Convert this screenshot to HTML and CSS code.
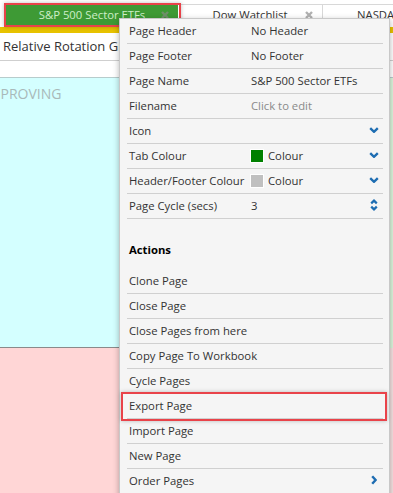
FILE: index.html
```html
<!DOCTYPE html>
<html lang="en">
<head>
    <meta charset="UTF-8">
    <meta name="viewport" content="width=device-width, initial-scale=1.0">
    <title>Page Settings</title>
    <link rel="stylesheet" href="styles.css">
</head>
<body>
    <div class="app">
        <div class="tabbar">
            <div class="tab active">
                <span class="tab-label">S&amp;P 500 Sector ETFs</span>
                <svg class="tab-close" viewBox="0 0 10 10"><path d="M2 2l6 6M8 2l-6 6"/></svg>
            </div>
            <div class="tab">
                <span class="tab-label">Dow Watchlist</span>
                <svg class="tab-close" viewBox="0 0 10 10"><path d="M2 2l6 6M8 2l-6 6"/></svg>
            </div>
            <div class="tab last">
                <span class="tab-label">NASDAQ 100</span>
            </div>
        </div>
        <div class="accent"></div>
        <div class="page-title">Relative Rotation Graph</div>
        <div class="spacer"></div>
        <div class="quadrants">
            <div class="quad improving">IMPROVING</div>
            <div class="quad leading"></div>
            <div class="quad lagging"></div>
            <div class="quad weakening"></div>
        </div>
    </div>

    <!-- highlight around the active tab -->
    <div class="mark mark-tab"></div>

    <div class="menu">
        <div class="menu-row">
            <span>Page Header</span><span>No Header</span><span></span>
        </div>
        <div class="menu-row">
            <span>Page Footer</span><span>No Footer</span><span></span>
        </div>
        <div class="menu-row">
            <span>Page Name</span><span>S&amp;P 500 Sector ETFs</span><span></span>
        </div>
        <div class="menu-row">
            <span>Filename</span><span class="muted">Click to edit</span><span></span>
        </div>
        <div class="menu-row">
            <span>Icon</span><span></span>
            <svg class="chev" viewBox="0 0 10 6"><path d="M1.2 1.2l3.8 3.6 3.8-3.6"/></svg>
        </div>
        <div class="menu-row">
            <span>Tab Colour</span>
            <span class="swatch-cell"><i class="swatch green"></i>Colour</span>
            <svg class="chev" viewBox="0 0 10 6"><path d="M1.2 1.2l3.8 3.6 3.8-3.6"/></svg>
        </div>
        <div class="menu-row">
            <span>Header/Footer Colour</span>
            <span class="swatch-cell"><i class="swatch grey"></i>Colour</span>
            <svg class="chev" viewBox="0 0 10 6"><path d="M1.2 1.2l3.8 3.6 3.8-3.6"/></svg>
        </div>
        <div class="menu-row">
            <span>Page Cycle (secs)</span><span>3</span>
            <svg class="updown" viewBox="0 0 8 12"><path d="M1.2 4.4l2.8-2.8 2.8 2.8M1.2 7.6l2.8 2.8 2.8-2.8"/></svg>
        </div>

        <div class="menu-heading">Actions</div>

        <div class="menu-row"><span>Clone Page</span><span></span><span></span></div>
        <div class="menu-row"><span>Close Page</span><span></span><span></span></div>
        <div class="menu-row"><span>Close Pages from here</span><span></span><span></span></div>
        <div class="menu-row"><span>Copy Page To Workbook</span><span></span><span></span></div>
        <div class="menu-row"><span>Cycle Pages</span><span></span><span></span></div>
        <div class="menu-row"><span>Export Page</span><span></span><span></span></div>
        <div class="menu-row"><span>Import Page</span><span></span><span></span></div>
        <div class="menu-row"><span>New Page</span><span></span><span></span></div>
        <div class="menu-row">
            <span>Order Pages</span><span></span>
            <svg class="chev-right" viewBox="0 0 6 10"><path d="M1.2 1.2l3.4 3.8-3.4 3.8"/></svg>
        </div>
    </div>

    <!-- highlight around Export Page -->
    <div class="mark mark-export"></div>
</body>
</html>
```

FILE: styles.css
```css
* {
    margin: 0;
    padding: 0;
    box-sizing: border-box;
}

body {
    width: 393px;
    height: 493px;
    overflow: hidden;
    position: relative;
    background: #ffffff;
    font-family: 'Open Sans', 'Noto Sans', sans-serif;
    font-size: 11.3px;
    color: #333333;
}

.app {
    display: flex;
    flex-direction: column;
    height: 100%;
}

/* tabs */

.tabbar {
    height: 27px;
    padding: 4px 0 0 6px;
    display: flex;
    align-items: flex-start;
    overflow: hidden;
}

.tab {
    position: relative;
    width: 145px;
    height: 20px;
    display: flex;
    align-items: center;
    justify-content: center;
    border-top: 1px solid #d8d8d8;
    border-right: 1px solid #d8d8d8;
    color: #333333;
    flex-shrink: 0;
}

.tab.last {
    justify-content: flex-start;
    padding-left: 34px;
    border-right: none;
}

.tab.active {
    width: 172px;
    margin-top: 1px;
    background: #3e9a35;
    color: #cdeec8;
    border: none;
}

.tab-label {
    line-height: 18px;
    white-space: nowrap;
}

.tab-close {
    position: absolute;
    right: 8px;
    top: 5px;
    width: 10px;
    height: 10px;
    fill: none;
    stroke: #b0b0b0;
    stroke-width: 2.4;
}

.tab.active .tab-close {
    stroke: #6f8f6a;
}

.accent {
    height: 6px;
    background: #e8c300;
}

.page-title {
    height: 28px;
    padding: 0 3px 1px;
    display: flex;
    align-items: center;
    font-size: 13px;
    color: #333333;
    border-bottom: 1px solid #cfcfcf;
    white-space: nowrap;
}

.spacer {
    height: 17px;
    border-bottom: 1px solid #b7cccc;
}

/* quadrant panels behind the menu */

.quadrants {
    flex: 1;
    display: grid;
    grid-template-columns: 408px 1fr;
    grid-template-rows: 270px 1fr;
    margin-left: -20px;
}

.quad {
    font-size: 14px;
    color: #a9b9b9;
    padding: 6px 0 0 4px;
}

.improving {
    background: #d4ffff;
    border-bottom: 1px solid #8a8a8a;
}

.leading {
    background: #dcf5dc;
}

.lagging {
    background: #ffd6d6;
}

.weakening {
    background: #f6e2e2;
}

/* settings menu */

.menu {
    position: absolute;
    left: 119px;
    top: 18px;
    width: 271px;
    height: 490px;
    padding: 0 6px 0 7px;
    background: #f5f5f5;
    border: 1px solid #c8c8c8;
    box-shadow: 0 2px 6px rgba(0, 0, 0, 0.3);
}

.menu-row {
    display: grid;
    grid-template-columns: 122px 1fr auto;
    align-items: center;
    height: 25px;
    padding: 0 4px 2px 2px;
    border-bottom: 1px solid #d0d0d0;
    white-space: nowrap;
}

.menu-row .muted {
    color: #8a8a8a;
}

.menu-heading {
    height: 20px;
    line-height: 20px;
    margin: 21px 0 9px;
    padding-left: 2px;
    font-weight: 700;
    color: #000000;
}

.swatch-cell {
    display: flex;
    align-items: center;
    gap: 4px;
    margin-left: -1px;
}

.swatch-cell .swatch {
    display: block;
    width: 14px;
    height: 14px;
    border: 1px solid #ffffff;
    margin-top: 2px;
}

.swatch.green {
    background: #008000;
}

.swatch.grey {
    background: #c0c0c0;
}

.chev {
    width: 10px;
    height: 6px;
    fill: none;
    stroke: #1e6db2;
    stroke-width: 2.4;
}

.updown {
    width: 8px;
    height: 12px;
    margin-right: 1px;
    fill: none;
    stroke: #1e6db2;
    stroke-width: 2.2;
}

.chev-right {
    width: 6px;
    height: 10px;
    margin-right: 2px;
    fill: none;
    stroke: #1e6db2;
    stroke-width: 2.4;
}

/* red annotation boxes */

.mark {
    position: absolute;
    border: 2px solid #e9434a;
    box-shadow: 0 0 4px rgba(0, 0, 0, 0.25);
}

.mark-tab {
    left: 4px;
    top: 3px;
    width: 177px;
    height: 24px;
}

.mark-export {
    left: 121px;
    top: 392px;
    width: 266px;
    height: 29px;
}
```
